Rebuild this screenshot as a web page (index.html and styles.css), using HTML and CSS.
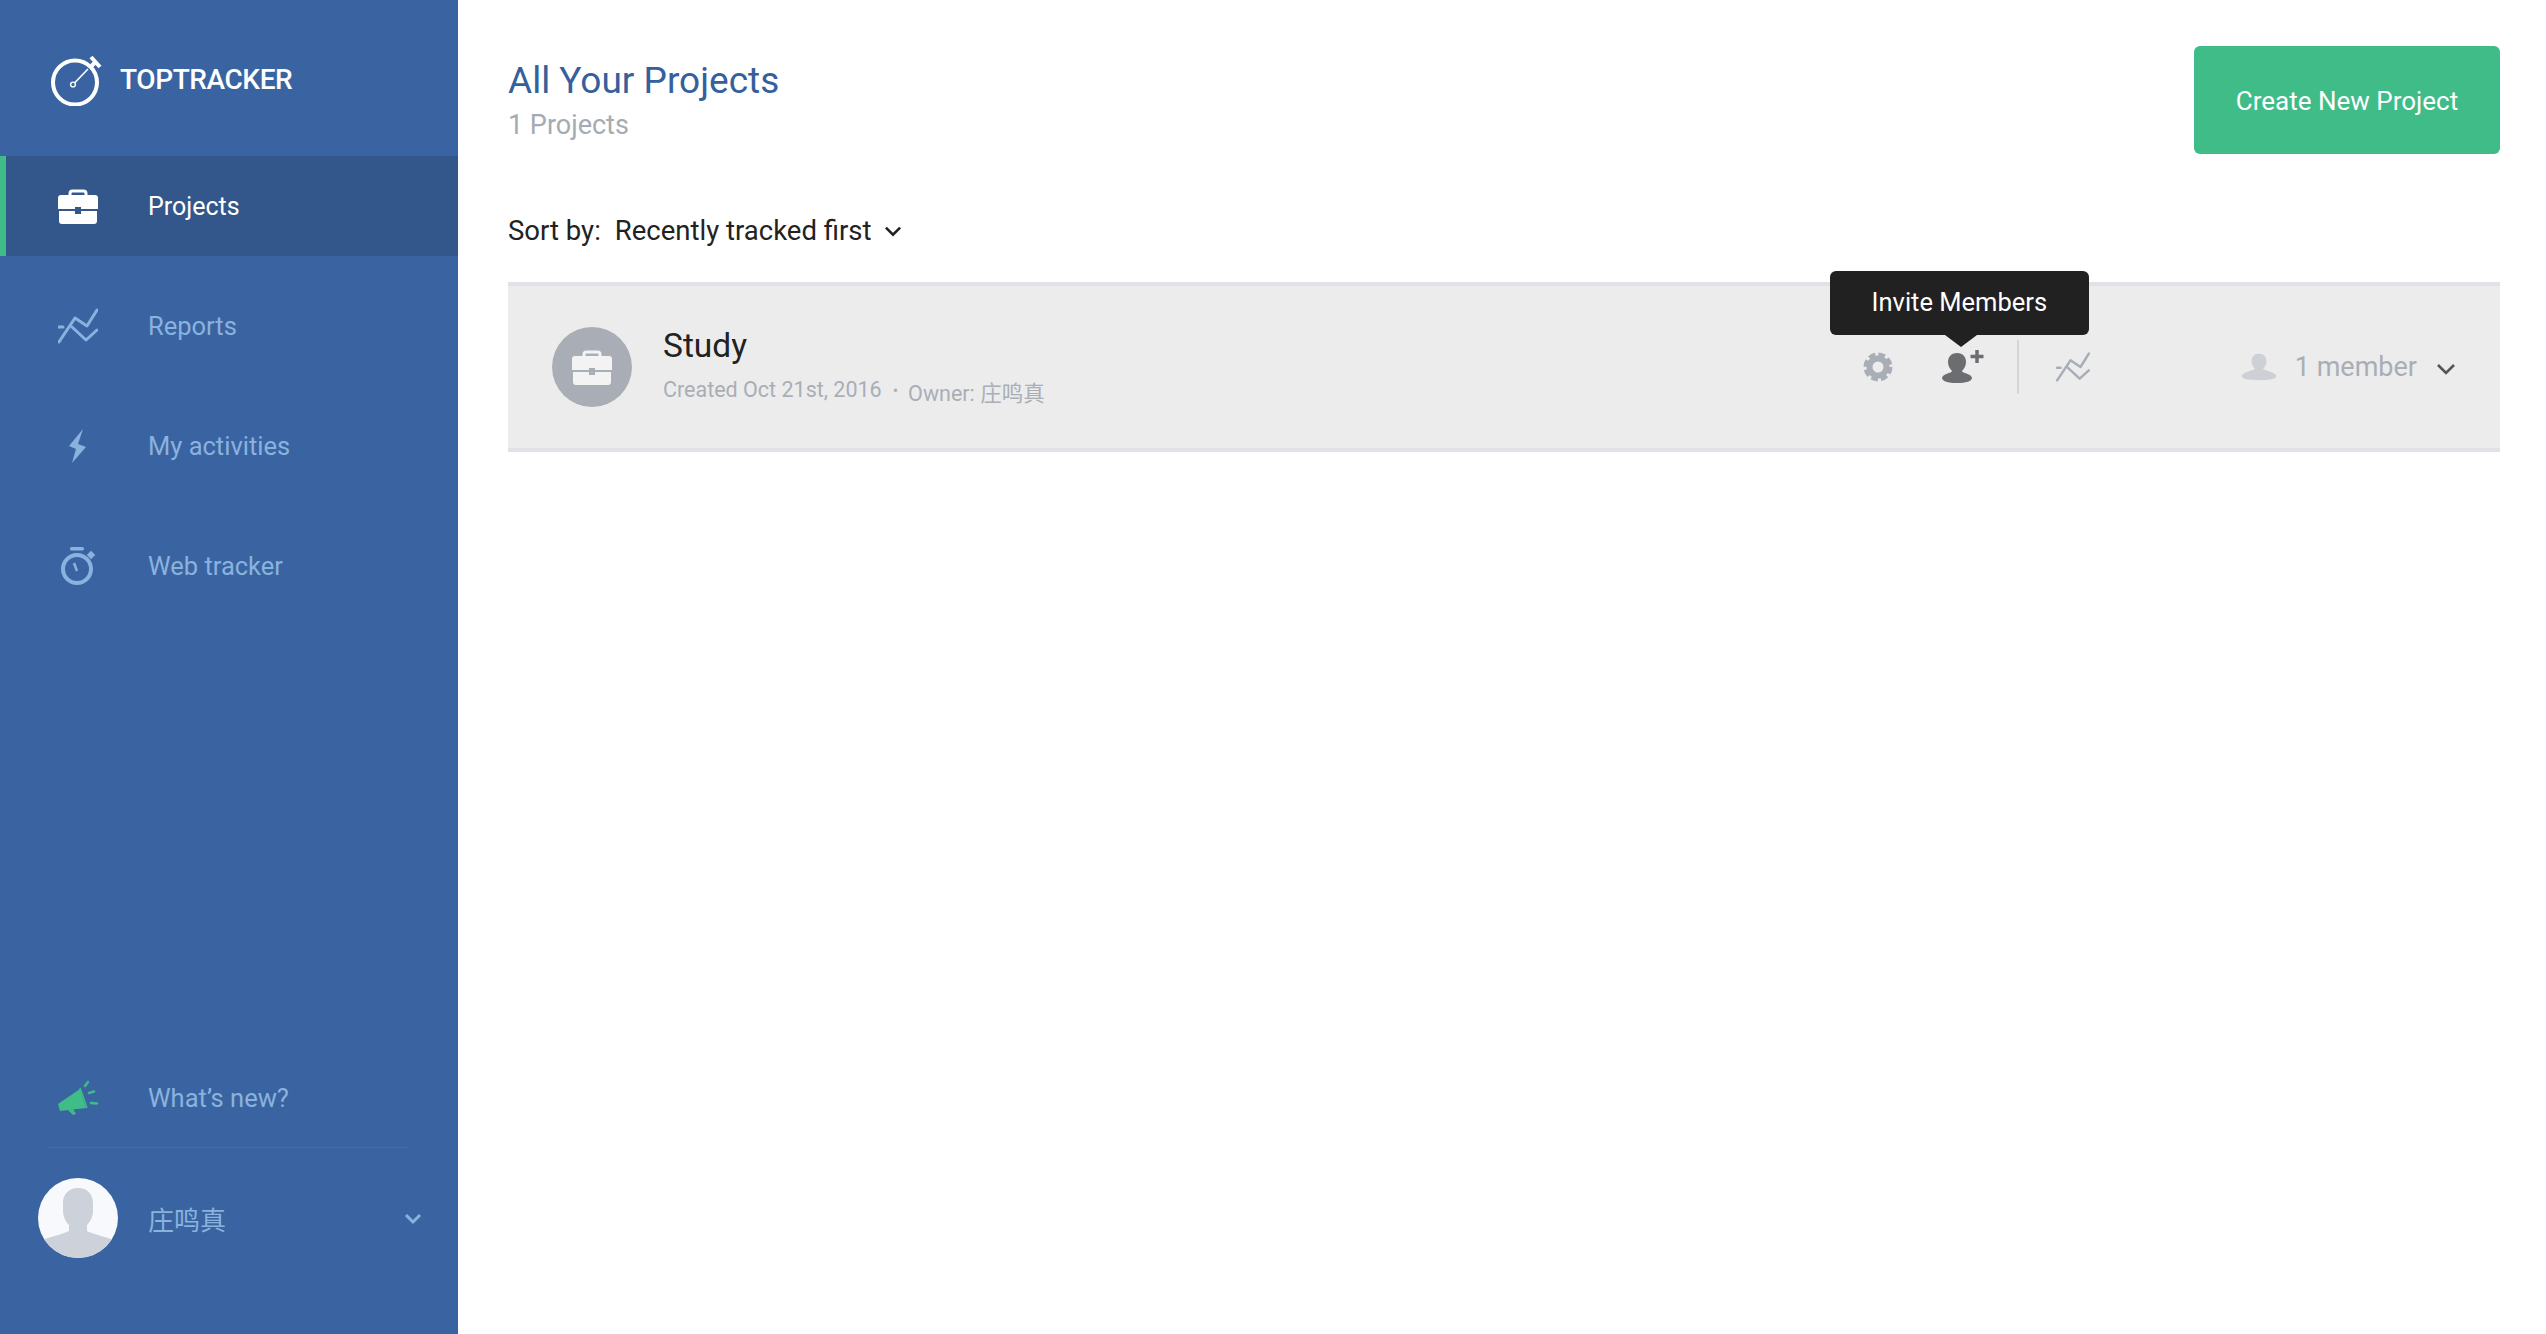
FILE: index.html
```html
<!DOCTYPE html>
<html lang="en">
<head>
<meta charset="utf-8">
<title>TopTracker</title>
<link rel="stylesheet" href="styles.css">
</head>
<body>
<div class="app">
  <aside class="sidebar">
    <div class="brand">
      <svg class="logo" width="52" height="56" viewBox="0 0 52 56"><circle cx="25" cy="32.500" r="22" fill="none" stroke="#fff" stroke-width="4"/><path d="M24.500 33 38 19" stroke="#fff" stroke-width="1.600"/><circle cx="23" cy="34.500" r="2.400" fill="none" stroke="#fff" stroke-width="1.400"/><path d="M41 7l9 10M45.500 12l-4.500 4.500" fill="none" stroke="#fff" stroke-width="4"/></svg>
      <span class="brand-name">TOPTRACKER</span>
    </div>
    <nav class="nav">
      <a class="nav-item active">
        <span class="nav-icon"><svg width="40" height="35" viewBox="0 0 40 35"><path d="M12 8V4.500a2.500 2.500 0 0 1 2.500-2.500h11a2.500 2.500 0 0 1 2.500 2.500V8" fill="none" stroke="currentColor" stroke-width="3"/><path d="M3 6h34a3 3 0 0 1 3 3v11H23v-2h-6v2H0V9a3 3 0 0 1 3-3z" fill="currentColor"/><path d="M1 22h16v3h6v-3h16v10a3 3 0 0 1-3 3H4a3 3 0 0 1-3-3z" fill="currentColor"/></svg></span>
        <span>Projects</span>
      </a>
      <a class="nav-item">
        <span class="nav-icon"><svg width="40" height="36" viewBox="0 0 40 36"><path d="M1 34 17 10l12 8L39 2M14 19l14 13 11-10M1 19h4" fill="none" stroke="currentColor" stroke-width="3" stroke-linecap="round" stroke-linejoin="round"/></svg></span>
        <span>Reports</span>
      </a>
      <a class="nav-item">
        <span class="nav-icon"><svg width="18" height="35" viewBox="0 0 18 35"><path d="M14 0 0 17l7 3-4 14 14-16-8-3z" fill="currentColor"/></svg></span>
        <span>My activities</span>
      </a>
      <a class="nav-item">
        <span class="nav-icon"><svg width="36" height="38" viewBox="0 0 36 38"><circle cx="17" cy="22" r="14" fill="none" stroke="currentColor" stroke-width="4"/><rect x="10" y="0" width="14" height="3.500" rx="1.500" fill="currentColor"/><rect x="28" y="5" width="6" height="6" transform="rotate(45 31 8)" fill="currentColor"/><path d="m14 16 3 8" stroke="currentColor" stroke-width="2.500"/></svg></span>
        <span>Web tracker</span>
      </a>
    </nav>
    <div class="side-foot">
      <a class="nav-item news">
        <span class="nav-icon"><svg width="42" height="36" viewBox="0 0 42 36"><path d="M1 24 23 9l6 19-26 3z" fill="#3fbc87"/><path d="m23 8 7 20" stroke="#3fbc87" stroke-width="1.500"/><path d="m11 30 5 5 3-1-3-5" fill="#3fbc87"/><path d="m28 6 3-4M32 13l5-1.500M34 23l6 .5" stroke="#3fbc87" stroke-width="2.500" stroke-linecap="round"/></svg></span>
        <span>What’s new?</span>
      </a>
      <div class="divider"></div>
      <div class="user">
        <svg class="avatar" width="80" height="80" viewBox="0 0 80 80"><defs><clipPath id="avatar-clip"><circle cx="40" cy="40" r="40"/></clipPath></defs><circle cx="40" cy="40" r="40" fill="#f8f9fd"/><path clip-path="url(#avatar-clip)" d="M40 10c9 0 15 6 15 15v8c0 6-3 11-6 14v6c5 3 16 5 24 8L80 80H0l7-19c8-3 19-5 24-8v-6c-3-3-6-8-6-14v-8c0-9 6-15 15-15z" fill="#cdd1d9"/></svg>
        <span class="user-name">庄鸣真</span>
        <svg class="user-chevron" width="18" height="12" viewBox="0 0 18 12"><path d="m2 2 7 7 7-7" fill="none" stroke="currentColor" stroke-width="3"/></svg>
      </div>
    </div>
  </aside>
  <main class="main">
    <header class="head">
      <div>
        <h1 class="title">All Your Projects</h1>
        <div class="count">1 Projects</div>
      </div>
      <button class="create">Create New Project</button>
    </header>
    <div class="sort">
      <span class="sort-label">Sort by:</span>
      <span>Recently tracked first</span>
      <svg class="sort-chevron" width="18" height="12" viewBox="0 0 16 11"><path d="m1.500 1.500 6.500 6.500 6.500-6.500" fill="none" stroke="#222" stroke-width="2.400"/></svg>
    </div>
    <section class="card">
      <div class="project-badge"><svg width="40" height="35" viewBox="0 0 40 35"><path d="M12 8V4.500a2.500 2.500 0 0 1 2.500-2.500h11a2.500 2.500 0 0 1 2.500 2.500V8" fill="none" stroke="currentColor" stroke-width="3"/><path d="M3 6h34a3 3 0 0 1 3 3v11H23v-2h-6v2H0V9a3 3 0 0 1 3-3z" fill="currentColor"/><path d="M1 22h16v3h6v-3h16v10a3 3 0 0 1-3 3H4a3 3 0 0 1-3-3z" fill="currentColor"/></svg></div>
      <div class="project-info">
        <div class="project-name">Study</div>
        <div class="project-meta"><span>Created Oct 21st, 2016</span><span class="dot">•</span><span class="owner">Owner: 庄鸣真</span></div>
      </div>
      <div class="actions">
        <svg class="gear" width="30" height="30" viewBox="0 0 30 30"><circle cx="15" cy="15" r="8.500" fill="none" stroke="#a9aeb6" stroke-width="6"/><circle cx="15" cy="15" r="12" fill="none" stroke="#a9aeb6" stroke-width="5" stroke-dasharray="6.500 2.925"/></svg>
        <div class="invite">
          <svg width="46" height="34" viewBox="0 0 46 34"><path d="M16 4c6 0 9 4 9 9 0 4-2 7-4 9 0 2 10 3 10 7 0 3-6 5-15 5S1 32 1 29c0-4 10-5 10-7-2-2-4-5-4-9 0-5 3-9 9-9z" fill="#6b6d70"/><path d="M36 1v13M29.500 7.500h13" stroke="#6b6d70" stroke-width="3.500"/></svg>
          <div class="tooltip">Invite Members</div>
        </div>
        <span class="vline"></span>
        <svg width="34" height="30" viewBox="0 0 40 36"><path d="M1 34 17 10l12 8L39 2M14 19l14 13 11-10M1 19h4" fill="none" stroke="#a9aeb6" stroke-width="3" stroke-linecap="round" stroke-linejoin="round"/></svg>
      </div>
      <div class="members">
        <svg width="38" height="34" viewBox="0 0 46 34"><path d="M23 1c6 0 9 4 9 9 0 4-2 7-4 9 0 2 16 4 16 9 0 4-9 5-21 5S2 32 2 28c0-5 16-7 16-9-2-2-4-5-4-9 0-5 3-9 9-9z" fill="#cdd0d5"/></svg>
        <span class="member-count">1 member</span>
        <svg class="member-chevron" width="20" height="13" viewBox="0 0 20 13"><path d="m2 2 8 8 8-8" fill="none" stroke="#555" stroke-width="2.600"/></svg>
      </div>
    </section>
  </main>
</div>
</body>
</html>
```
FILE: styles.css
```css
* { box-sizing: border-box; }
html, body { margin: 0; height: 100%; }
body { font-family: "Roboto", "Noto Sans CJK SC", sans-serif; background: #fff; overflow: hidden; }
.app { display: flex; height: 1334px; }

.sidebar { width: 458px; flex: none; background: #3a64a1; display: flex; flex-direction: column; color: #8ab2de; padding-bottom: 76px; }
.brand { height: 156px; display: flex; align-items: center; padding: 0 0 0 50px; gap: 18px; }
.brand-name { color: #fff; font-size: 28px; font-weight: 500; letter-spacing: -0.4px; margin-top: 2px; }

.nav { display: flex; flex-direction: column; gap: 20px; }
.nav-item { display: flex; align-items: center; height: 100px; padding-left: 38px; font-size: 25.500px; font-weight: 400; }
.nav-icon { width: 80px; flex: none; margin-right: 30px; display: flex; justify-content: center; }
.nav-item.active { background: #33578a; color: #fff; box-shadow: inset 6px 0 0 #3fbc87; font-size: 25px; }

.side-foot { margin-top: auto; display: flex; flex-direction: column; }
.news { height: 70px; }
.divider { height: 1px; margin: 14px 50px 0 48px; background: #4670ad; }
.user { display: flex; align-items: center; margin-top: 30px; padding-left: 38px; height: 80px; }
.user-name { margin-left: 30px; font-size: 26px; flex: 1; }
.user-chevron { margin-right: 36px; margin-top: 2px; }

.main { flex: 1; padding: 46px 46px 0 50px; min-width: 0; }
.head { display: flex; justify-content: space-between; align-items: flex-start; }
.title { margin: 13px 0 0; font-size: 37px; line-height: 44px; font-weight: 400; color: #34609b; }
.count { margin-top: 5px; font-size: 27px; line-height: 34px; font-weight: 400; color: #a5abb3; }
.create { width: 306px; height: 108px; padding: 2px 0 0; border: 0; border-radius: 6px; background: #3fbc87; color: #fff; font: 400 26px "Roboto", sans-serif; }

.sort { display: flex; align-items: center; margin-top: 59px; height: 34px; font-size: 27.500px; color: #222; }
.sort-label { margin-right: 14px; }
.sort-chevron { margin-left: 13px; margin-top: 3px; }

.card { margin-top: 35px; height: 170px; background: #ececed; border-top: 4px solid #e0e2e7; border-bottom: 4px solid #e0e2e7; display: flex; align-items: center; padding-left: 44px; }
.project-badge { width: 80px; height: 80px; border-radius: 50%; background: #a9aeb6; color: #f3f3f3; display: flex; align-items: center; justify-content: center; flex: none; }
.project-info { margin-left: 31px; margin-top: -2px; }
.project-name { font-size: 33.500px; line-height: 42px; color: #222; }
.project-meta { display: flex; align-items: center; margin-top: 5px; font-size: 21.500px; color: #a9aeb6; }
.dot { margin: 2px 10px 0 11px; font-size: 16px; }
.owner { margin-top: 4px; }

.actions { margin-left: auto; display: flex; align-items: center; }
.gear { margin-right: 1px; }
.invite { position: relative; margin-left: 47px; height: 34px; margin-top: -2px; }
.tooltip { position: absolute; left: -111px; bottom: 48px; width: 259px; height: 64px; padding-bottom: 2px; background: #212121; border-radius: 6px; color: #fff; font-size: 25.500px; display: flex; align-items: center; justify-content: center; }
.tooltip::after { content: ""; position: absolute; left: 115px; top: 100%; border: 16px solid transparent; border-top: 12px solid #212121; border-bottom: 0; }
.vline { width: 2px; height: 54px; margin: 0 37px 0 30px; background: #d3d5d9; }

.members { display: flex; align-items: center; margin-left: 150px; margin-right: 44px; color: #a9aeb6; }
.member-count { margin-left: 17px; font-size: 27px; }
.member-chevron { margin-left: 19px; margin-top: 4px; }
```
